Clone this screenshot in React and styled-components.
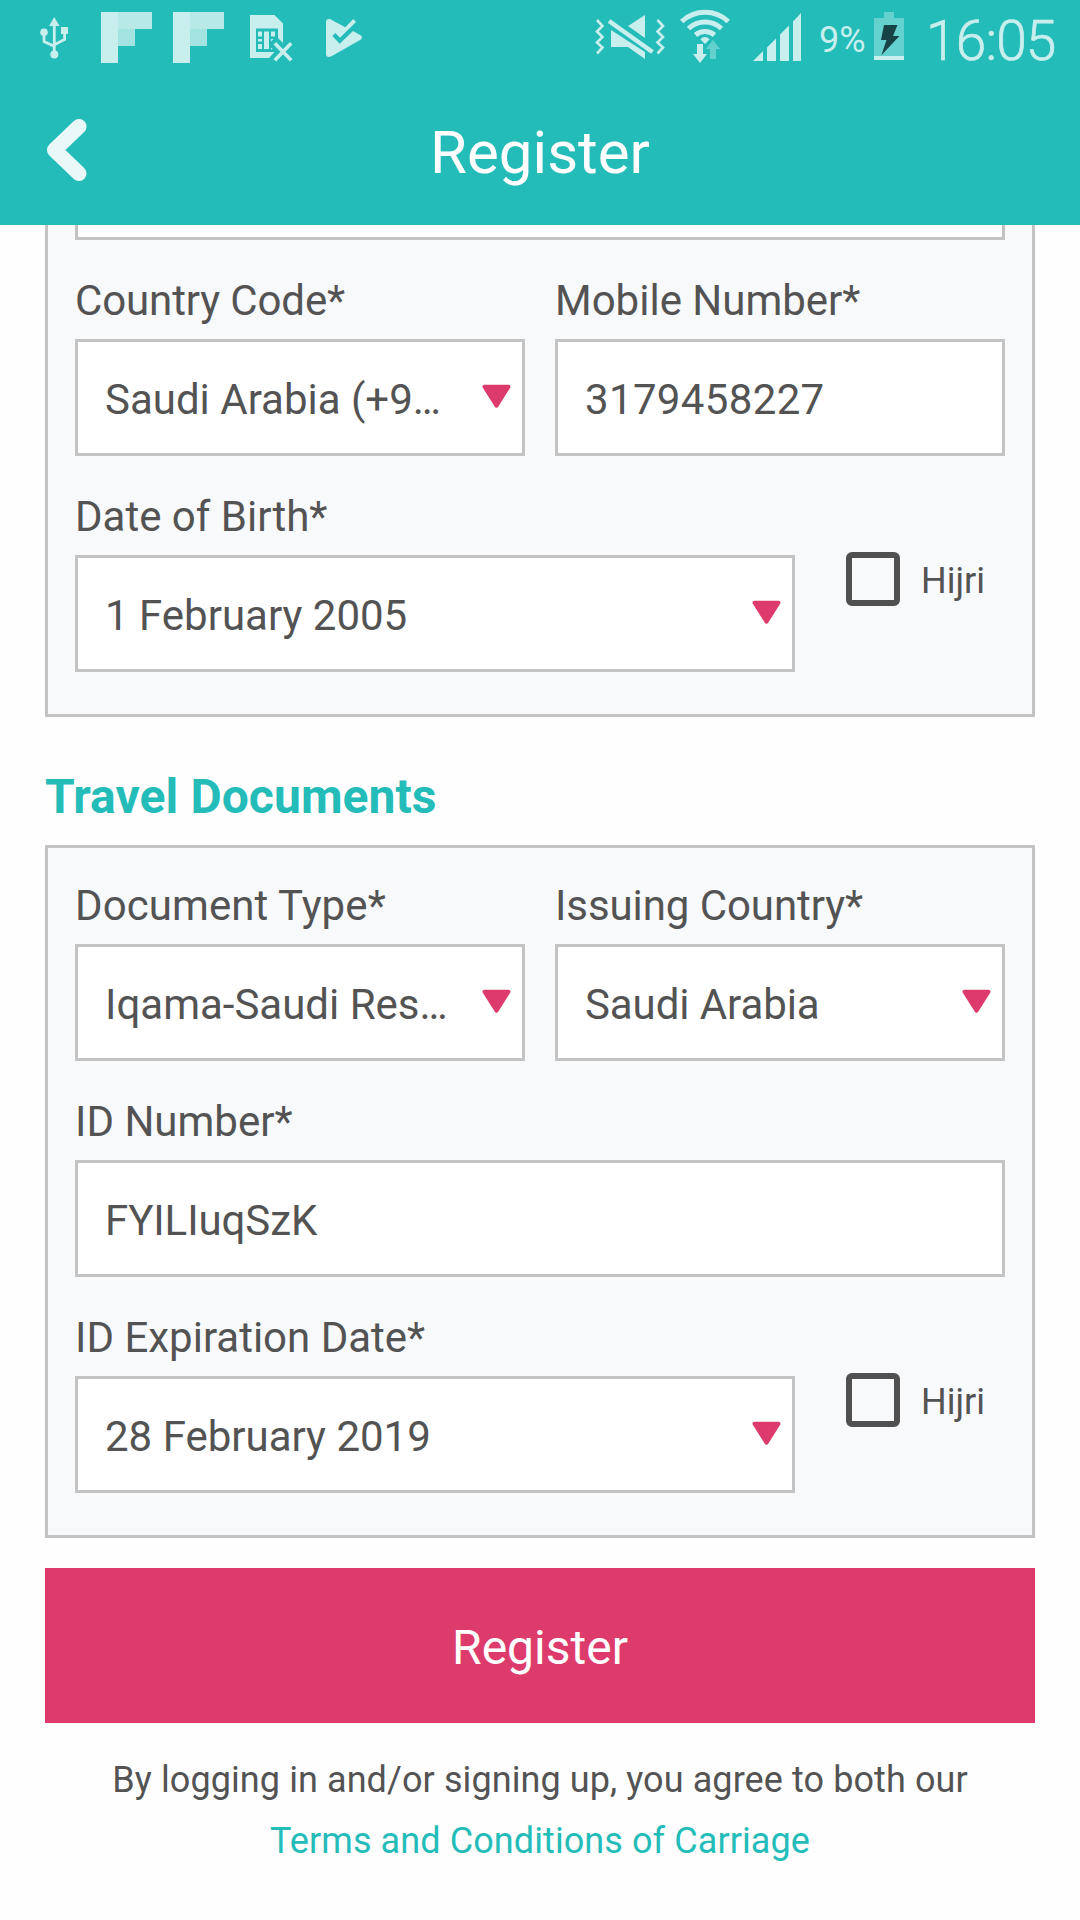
import React from "react";
import styled, { createGlobalStyle, css } from "styled-components";

const teal = "#24bcb9";
const pink = "#dd3b6c";
const ink = "#535353";
const line = "#c3c3c3";
const pale = "#c8eeed";

const GlobalStyle = createGlobalStyle`
  *, *::before, *::after { box-sizing: border-box; }
  body { margin: 0; background: #fefefe; }
`;

const Screen = styled.div`
  width: 1080px;
  height: 1920px;
  overflow: hidden;
  display: flex;
  flex-direction: column;
  background: #fefefe;
  color: ${ink};
  font-family: Roboto, "Noto Sans", sans-serif;
  font-size: 42px;
`;

const StatusBar = styled.div`
  flex: none;
  display: flex;
  justify-content: space-between;
  height: 75px;
  padding: 0 24px 0 40px;
  background: ${teal};
  color: ${pale};
`;

const StatusGroup = styled.div`
  display: flex;
  align-items: flex-start;
`;

const StatusIcon = styled.svg`
  display: block;
  flex: none;
  height: 75px;
  margin-right: ${(p) => p.$gap || 0}px;
`;

const BatteryText = styled.span`
  width: 55px;
  font-size: 36px;
  line-height: 42px;
  padding-top: 19px;
`;

const Clock = styled.span`
  width: 130px;
  font-size: 55px;
  font-weight: 300;
  letter-spacing: -0.8px;
  line-height: 64px;
  padding-top: 9px;
  -webkit-text-stroke: 0.7px ${pale};
`;

const Header = styled.header`
  flex: none;
  display: grid;
  grid-template-columns: 120px 1fr 120px;
  height: 150px;
  background: ${teal};
  color: #fff;
`;

const BackButton = styled.button`
  display: flex;
  padding: 43px 0 0 46px;
  border: 0;
  background: none;
`;

const Title = styled.h1`
  margin: 0;
  font-size: 60px;
  font-weight: 400;
  line-height: 70px;
  padding-top: 43px;
  text-align: center;
`;

const Content = styled.main`
  flex: 1;
  display: flex;
  flex-direction: column;
  padding: 0 45px;
`;

const Card = styled.section`
  display: flex;
  flex-direction: column;
  padding: 0 27px 42px;
  border: 3px solid ${line};
  background: #f8f9fb;
  ${(p) =>
    p.$clipped &&
    css`
      border-top: 0;
    `}
`;

const ScrolledField = styled.div`
  height: 15px;
  border: 3px solid ${line};
  border-top: 0;
  background: #fff;
`;

const Row = styled.div`
  display: grid;
  grid-template-columns: ${(p) => p.$columns || "1fr"};
  column-gap: 30px;
`;

const Field = styled.div`
  display: flex;
  flex-direction: column;
  min-width: 0;
`;

const Label = styled.label`
  height: ${(p) => (p.$first ? 96 : 99)}px;
  padding-top: ${(p) => (p.$first ? 34 : 37)}px;
  line-height: 48px;
  white-space: nowrap;
  letter-spacing: ${(p) => p.$tracking || 0}px;
`;

const Control = styled.div`
  display: flex;
  height: 117px;
  padding: 34px 10px 0 27px;
  border: 3px solid ${line};
  background: #fff;
  line-height: 48px;
`;

const Value = styled.span`
  flex: 1;
  min-width: 0;
  white-space: nowrap;
  letter-spacing: ${(p) => p.$tracking || 0}px;
`;

const Arrow = styled.svg`
  display: block;
  flex: none;
  margin-top: 8px;
`;

const HijriOption = styled.label`
  display: flex;
  align-items: flex-start;
  padding: 96px 0 0 21px;
  font-size: 36px;
`;

const CheckBox = styled.span`
  width: 54px;
  height: 54px;
  border: 6px solid #505050;
  border-radius: 6px;
`;

const HijriText = styled.span`
  margin-left: 21px;
  padding-top: 8px;
  line-height: 42px;
`;

const SectionTitle = styled.h2`
  height: 128px;
  margin: 0;
  padding-top: 52px;
  font-size: 48px;
  font-weight: 700;
  letter-spacing: 0.08px;
  line-height: 56px;
  color: ${teal};
`;

const SubmitButton = styled.button`
  flex: none;
  height: 155px;
  margin-top: 30px;
  padding: 4px 0 0;
  border: 0;
  background: ${pink};
  color: #fff;
  font: 400 48px/56px Roboto, "Noto Sans", sans-serif;
`;

const Legal = styled.p`
  display: flex;
  flex-direction: column;
  align-items: center;
  margin: 27px 0 0;
  font-size: 36px;
  letter-spacing: 0.09px;
  line-height: 61px;
  white-space: nowrap;
`;

const LegalLink = styled.a`
  color: ${teal};
`;

function UsbIcon() {
  return (
    <StatusIcon width="29" viewBox="40 0 29 75" $gap={32} fill={pale}>
      <path d="M54.3 17 59.5 26H49Z" />
      <circle cx="44" cy="32.3" r="3.8" />
      <rect x="61" y="27" width="7" height="7" />
      <circle cx="54.3" cy="54.5" r="4" />
      <path d="M54.3 24v30M44 34v7.500l10.300 4.800M64.600 33v6.500l-10.300 5.200" fill="none" stroke={pale} strokeWidth="2.8" />
    </StatusIcon>
  );
}

function FlipboardIcon({ gap }) {
  return (
    <StatusIcon width="51" viewBox="0 0 51 75" $gap={gap} shapeRendering="crispEdges">
      <path d="M0 12h17v51H0z" fill="#c8eeed" />
      <path d="M17 12h34v17H17z" fill="#b7e9e7" />
      <path d="M17 29h17v17H17z" fill="#a3e3e1" />
    </StatusIcon>
  );
}

function SimIcon() {
  return (
    <StatusIcon width="43" viewBox="250 0 43 75" $gap={32} fill={pale}>
      <path fillRule="evenodd" d="M250 15h24.500l8.500 8.500V43l-5-5V28.500h-22V52h18.500l-5.500 6H250Z" />
      <path d="M258 31.500h4v5h-4zM258 39h4v2.500h-4zM258 44h4v5h-4zM264 31.500h5V49h-5zM271 31.500h4v5h-4zM271 39h2.500l-2.500 2.500zM271 48h1.200v1.200h-1.200z" />
      <path d="m274.800 43.300 16.400 16.900M291.200 43.300 274.800 60.200" fill="none" stroke={pale} strokeWidth="3.600" />
    </StatusIcon>
  );
}

function PlayCheckIcon() {
  return (
    <StatusIcon width="38" viewBox="324 0 38 75" fill={pale}>
      <path d="M325 22q0-3.500 4-3L344.300 27.300 352.300 19 355 22 339 37.700 334.300 33 331.300 36 338.700 43.700 352 31 360 35.600q2 1.900 0 3.800L330 56.500q-5 1.500-5-2Z" />
    </StatusIcon>
  );
}

function VibrateIcon() {
  return (
    <StatusIcon width="71" viewBox="595 0 71 75" $gap={14} fill={pale}>
      <path d="m597 20 5.500 6-5.500 5.500 5.500 5.500-5.500 5.500 5.500 5-5.500 6M657.500 20l5.500 6-5.500 5.500 5.500 5.500-5.500 5.500 5.500 5-5.500 6" fill="none" stroke={pale} strokeWidth="2.600" />
      <path d="M611 30v17h17l17 12V52ZM645 15v23l-17-12Z" />
      <path d="m609 21 43.500 31" fill="none" stroke={pale} strokeWidth="4.600" />
    </StatusIcon>
  );
}

function WifiIcon() {
  return (
    <StatusIcon width="50" viewBox="680 0 50 75" $gap={23}>
      <g fill="none" stroke={pale} strokeWidth="5">
        <path d="M681.700 21.500a34 34 0 0 1 46.600 0" />
        <path d="M688.500 28.500a24.500 24.500 0 0 1 33 0" />
        <path d="M695.500 35a14.500 14.500 0 0 1 19 0" />
      </g>
      <path d="M705 44l-4.700-4.700q4.700-4.500 9.400 0Z" fill={pale} />
      <path d="M697 44h6v10h4l-7 9-7-9h4Z" fill={pale} />
      <path d="M710 59h6V49h4l-7-9-7 9h4Z" fill="#65d1ce" />
    </StatusIcon>
  );
}

function SignalIcon() {
  return (
    <StatusIcon width="48" viewBox="753 0 48 75" $gap={18} fill={pale}>
      <path d="M753 61 763 51v10ZM767 61V47.500L776 38.500V61ZM780 61V34.500L789 25.500V61ZM793 61V21.500L801 13V61Z" />
    </StatusIcon>
  );
}

function BatteryIcon() {
  return (
    <StatusIcon width="30" viewBox="874 0 30 75" $gap={22}>
      <path d="M874 18h10v-6h10v6h10v38h-30Z" fill="#65d1ce" />
      <path d="M874 56h30v4h-30Z" fill={pale} />
      <path d="M884 25h13.500l-4.500 11h6.500L881.500 55l5-15H881Z" fill="#174347" />
    </StatusIcon>
  );
}

function SelectField({ label, value, first, labelTracking, tracking, select = true }) {
  return (
    <Field>
      <Label $first={first} $tracking={labelTracking}>{label}</Label>
      <Control>
        <Value $tracking={tracking}>{value}</Value>
        {select && (
          <Arrow width="30" height="26" viewBox="0.5 0.3 30 26">
            <path d="M3 3h24L15 22Z" fill={pink} stroke={pink} strokeWidth="4" strokeLinejoin="round" />
          </Arrow>
        )}
      </Control>
    </Field>
  );
}

function DateRow({ label, value }) {
  return (
    <Row $columns="720px 1fr">
      <SelectField label={label} value={value} />
      <HijriOption>
        <CheckBox />
        <HijriText>Hijri</HijriText>
      </HijriOption>
    </Row>
  );
}

export default function App() {
  return (
    <Screen>
      <GlobalStyle />
      <StatusBar>
        <StatusGroup>
          <UsbIcon />
          <FlipboardIcon gap={21} />
          <FlipboardIcon gap={26} />
          <SimIcon />
          <PlayCheckIcon />
        </StatusGroup>
        <StatusGroup>
          <VibrateIcon />
          <WifiIcon />
          <SignalIcon />
          <BatteryText>9%</BatteryText>
          <BatteryIcon />
          <Clock>16:05</Clock>
        </StatusGroup>
      </StatusBar>
      <Header>
        <BackButton aria-label="Back">
          <svg width="42" height="64" viewBox="0 0 42 64">
            <path d="M33 8.500 8.500 32 33 55.500" fill="none" stroke="#e9f9f9" strokeWidth="15" strokeLinecap="round" strokeLinejoin="round" />
          </svg>
        </BackButton>
        <Title>Register</Title>
      </Header>
      <Content>
        <Card $clipped>
          <ScrolledField />
          <Row $columns="1fr 1fr">
            <SelectField label="Country Code*" labelTracking={-0.12} value="Saudi Arabia (+9…" />
            <SelectField label="Mobile Number*" value="3179458227" tracking={0.35} select={false} />
          </Row>
          <DateRow label="Date of Birth*" value="1 February 2005" />
        </Card>
        <SectionTitle>Travel Documents</SectionTitle>
        <Card>
          <Row $columns="1fr 1fr">
            <SelectField first label="Document Type*" labelTracking={0.08} value="Iqama-Saudi Res…" />
            <SelectField first label="Issuing Country*" labelTracking={-0.08} value="Saudi Arabia" tracking={-0.08} />
          </Row>
          <Row>
            <SelectField label="ID Number*" value="FYILIuqSzK" tracking={-0.08} select={false} />
          </Row>
          <DateRow label="ID Expiration Date*" value="28 February 2019" />
        </Card>
        <SubmitButton>Register</SubmitButton>
        <Legal>
          <span>By logging in and/or signing up, you agree to both our</span>
          <LegalLink>Terms and Conditions of Carriage</LegalLink>
        </Legal>
      </Content>
    </Screen>
  );
}
